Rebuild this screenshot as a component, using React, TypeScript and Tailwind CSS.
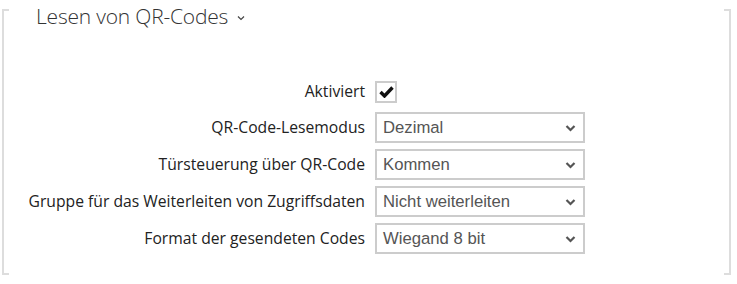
import React from "react";

const rows = [
  { label: "QR-Code-Lesemodus", value: "Dezimal" },
  { label: "Türsteuerung über QR-Code", value: "Kommen" },
  { label: "Gruppe für das Weiterleiten von Zugriffsdaten", value: "Nicht weiterleiten" },
  { label: "Format der gesendeten Codes", value: "Wiegand 8 bit" },
];

function Chevron() {
  return (
    <svg width="11" height="8" viewBox="0 0 11 8" className="shrink-0">
      <path d="M1.5 2 L5.5 6 L9.5 2" fill="none" stroke="#555" strokeWidth="2.2" />
    </svg>
  );
}

function FakeSelect({ value }: { value: string }) {
  return (
    <div className="w-[210px] h-[31px] border-2 border-[#ccc] bg-white flex items-center justify-between pl-[6px] pr-[7px] font-['Liberation_Sans',Arial,sans-serif] text-[16.7px] text-[#555]">
      <span>{value}</span>
      <Chevron />
    </div>
  );
}

export default function App() {
  return (
    <div className="w-[737px] h-[284px] bg-white pt-[9px] pl-[2px] pr-[6px] font-['Open_Sans',sans-serif] text-[#222]">
      <div className="border-x-2 border-[#ddd] h-[266px] flex flex-col">
        <div className="flex justify-between">
          <div className="w-[5px] h-[2px] bg-[#ddd]" />
          <div className="w-[5px] h-[2px] bg-[#ddd]" />
        </div>
        <div className="flex items-center gap-[9px] pl-[32px] -mt-[6px] h-[24px]">
          <span className="text-[21px] font-light text-[#333] tracking-[-0.2px]">Lesen von QR-Codes</span>
          <svg width="8" height="6" viewBox="0 0 8 6" className="mt-[1px]">
            <path d="M1 1.5 L4 4.5 L7 1.5" fill="none" stroke="#444" strokeWidth="1.2" />
          </svg>
        </div>
        <div className="flex flex-col gap-[6px] mt-[52px]">
          <div className="flex items-center h-[22px] mb-[3px]">
            <div className="w-[371px] text-right text-[15.7px] pr-[10px]">Aktiviert</div>
            <div className="w-[22px] h-[22px] border-2 border-[#ccc] flex items-center justify-center">
              <svg width="15" height="12" viewBox="0 0 15 12">
                <path d="M1.5 6 L5.5 10 L13.5 1.5" fill="none" stroke="#111" strokeWidth="3.4" />
              </svg>
            </div>
          </div>
          {rows.map((r) => (
            <div key={r.label} className="flex items-center">
              <div className="w-[371px] text-right text-[15.7px] pr-[10px] whitespace-nowrap">{r.label}</div>
              <FakeSelect value={r.value} />
            </div>
          ))}
        </div>
        <div className="mt-auto flex justify-between">
          <div className="w-[5px] h-[2px] bg-[#ddd]" />
          <div className="w-[5px] h-[2px] bg-[#ddd]" />
        </div>
      </div>
    </div>
  );
}
